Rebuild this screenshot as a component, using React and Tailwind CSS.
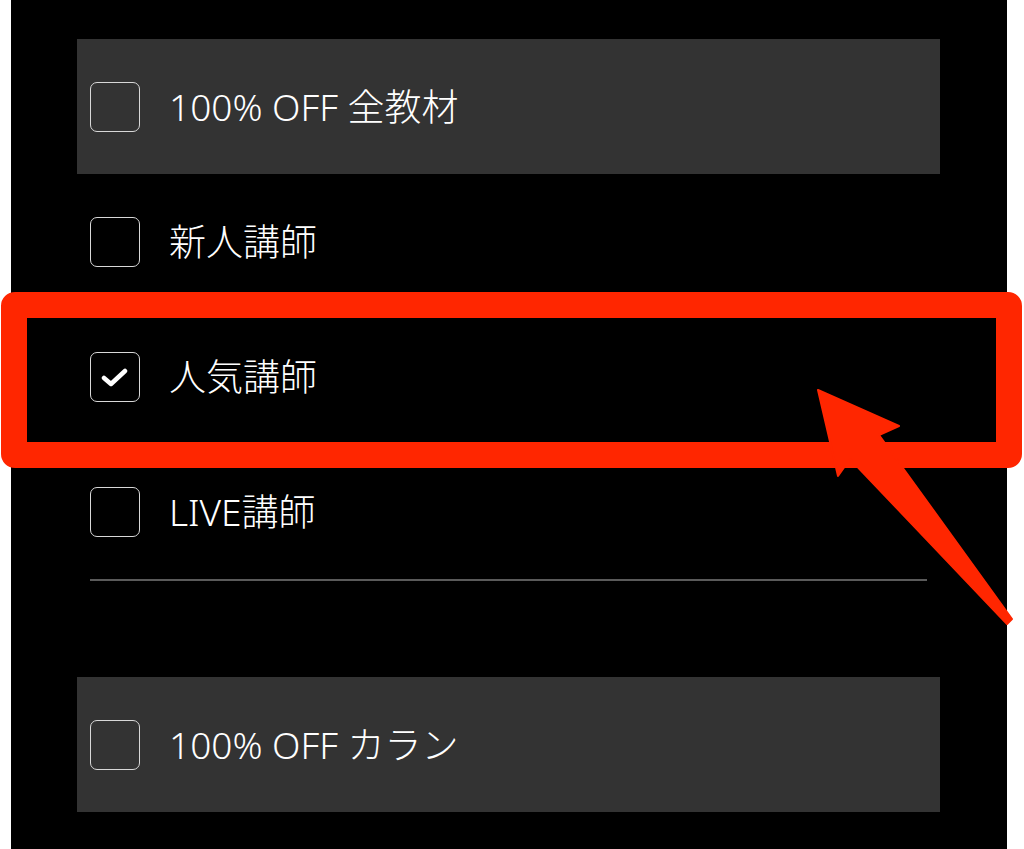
import React from "react";

const font = { fontFamily: '"Noto Sans", "Noto Sans CJK JP", sans-serif' };

const filters = [
  { label: "100% OFF 全教材", shaded: true },
  { label: "新人講師" },
  { label: "人気講師", checked: true },
  { label: "LIVE講師" },
];

const Checkbox = ({ checked }) => (
  <div className="w-[50px] h-[50px] shrink-0 rounded-[7px] border-[1.5px] border-[#d8d8d8] flex items-center justify-center">
    {checked && (
      <svg width="28" height="22" viewBox="0 0 28 22">
        <path
          d="M3 12 L10 18 L24 5"
          fill="none"
          stroke="white"
          strokeWidth="4.5"
          strokeLinecap="round"
          strokeLinejoin="round"
        />
      </svg>
    )}
  </div>
);

const Row = ({ label, checked, shaded }) => (
  <div
    className={
      "h-[135px] flex items-center pl-[13px] gap-[29px] " +
      (shaded ? "bg-[#333333]" : "")
    }
  >
    <Checkbox checked={checked} />
    <span className="text-[37px] leading-none font-light text-white">{label}</span>
  </div>
);

export default function App() {
  return (
    <div className="relative min-h-screen bg-white overflow-hidden" style={font}>
      <div className="ml-[11px] w-[996px] h-[849px] bg-black pt-[39px]">
        <div className="ml-[66px] w-[863px]">
          {filters.map((f, i) => (
            <Row key={i} {...f} />
          ))}
          <div className="mx-[13px] h-[2px] bg-[#5a5a5a]" />
          <div className="mt-[96px]">
            <Row label="100% OFF カラン" shaded />
          </div>
        </div>
      </div>

      {/* highlight frame */}
      <div className="absolute left-[1px] top-[292px] w-[1021px] h-[176px] border-[26px] border-[#ff2600] rounded-[14px]" />

      {/* arrow */}
      <svg
        className="absolute left-0 top-0 pointer-events-none"
        width="1024"
        height="849"
        viewBox="0 0 1024 849"
      >
        <polygon
          points="818,390 899,426 879,435 1012,619 1007,624 850,459 838,476"
          fill="#ff2600"
          stroke="#ff2600"
          strokeWidth="2"
          strokeLinejoin="round"
        />
      </svg>
    </div>
  );
}
